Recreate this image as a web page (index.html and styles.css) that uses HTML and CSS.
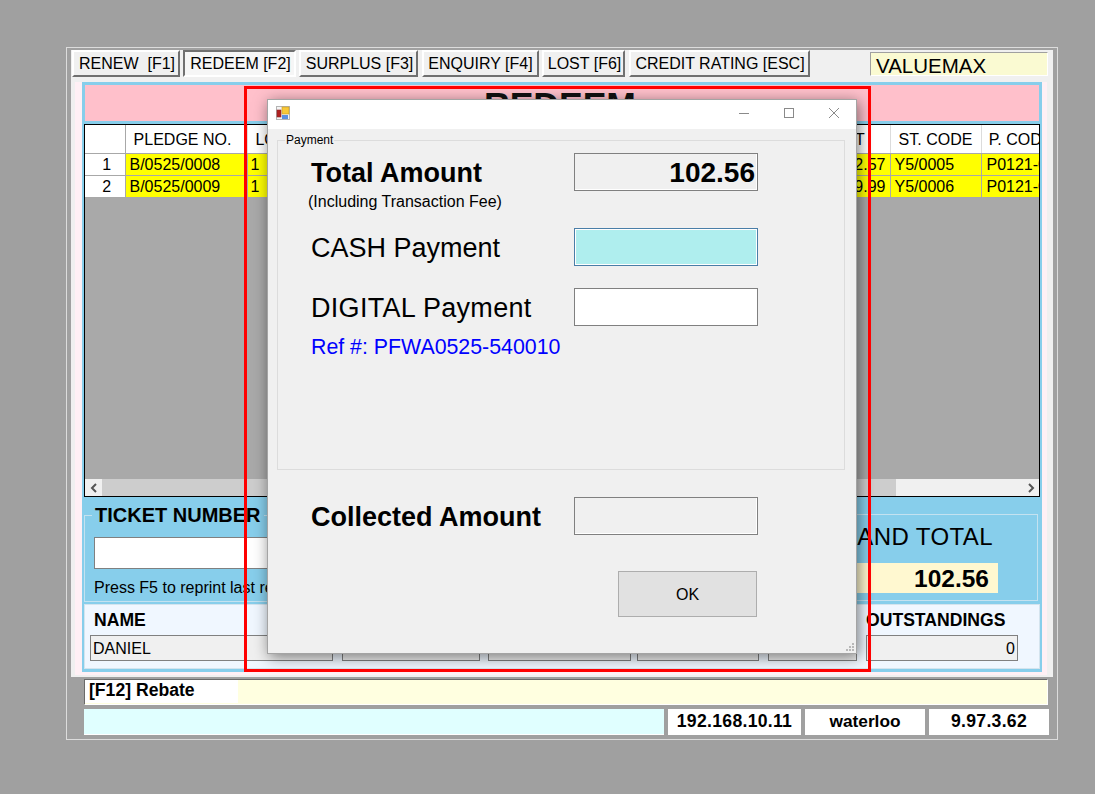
FILE: index.html
```html
<!DOCTYPE html>
<html lang="en">
<head>
    <meta charset="UTF-8">
    <meta name="viewport" content="width=device-width, initial-scale=1.0">
    <title>REDEEM</title>
    <link rel="stylesheet" href="styles.css">
</head>
<body>
    <div class="app">
        <div class="panel">
            <div class="tabs">
                <button type="button" class="tab">RENEW &nbsp;[F1]</button>
                <button type="button" class="tab active">REDEEM [F2]</button>
                <button type="button" class="tab">SURPLUS [F3]</button>
                <button type="button" class="tab">ENQUIRY [F4]</button>
                <button type="button" class="tab">LOST [F6]</button>
                <button type="button" class="tab">CREDIT RATING [ESC]</button>
                <div class="company">VALUEMAX</div>
            </div>
            <div class="blush">
                <div class="frame">
                    <div class="title">REDEEM</div>
                    <div class="grid">
                        <div class="grid-rows">
                            <table class="pledges">
                                <colgroup>
                                    <col class="c-no"><col class="c-pledge"><col class="c-lot"><col class="c-desc">
                                    <col class="c-amount"><col class="c-st"><col class="c-code">
                                </colgroup>
                                <tr>
                                    <th></th><th>PLEDGE NO.</th><th>LOT</th><th></th>
                                    <th>AMOUNT</th><th>ST. CODE</th><th>P. CODE</th>
                                </tr>
                                <tr>
                                    <td class="no">1</td><td>B/0525/0008</td><td>1</td><td></td>
                                    <td class="num">52.57</td><td>Y5/0005</td><td>P0121-0001</td>
                                </tr>
                                <tr>
                                    <td class="no">2</td><td>B/0525/0009</td><td>1</td><td></td>
                                    <td class="num">49.99</td><td>Y5/0006</td><td>P0121-0002</td>
                                </tr>
                            </table>
                        </div>
                        <div class="scrollbar">
                            <span class="sb-btn">
                                <svg width="8" height="10" viewBox="0 0 8 10"><path d="M6 1 2 5l4 4" fill="none" stroke="#555" stroke-width="2"/></svg>
                            </span>
                            <span class="sb-thumb"></span>
                            <span class="sb-track"></span>
                            <span class="sb-btn">
                                <svg width="8" height="10" viewBox="0 0 8 10"><path d="M2 1l4 4-4 4" fill="none" stroke="#555" stroke-width="2"/></svg>
                            </span>
                        </div>
                    </div>
                    <div class="totals">
                        <fieldset class="ticket">
                            <legend>TICKET NUMBER</legend>
                            <input type="text" class="ticket-input">
                            <div class="hint">Press F5 to reprint last receipt</div>
                        </fieldset>
                        <div class="grand">
                            <div class="grand-label">GRAND TOTAL</div>
                            <div class="grand-value">102.56</div>
                        </div>
                    </div>
                    <div class="info">
                        <div class="info-cell">
                            <label>NAME</label>
                            <div class="info-field">DANIEL</div>
                        </div>
                        <div class="info-cell"><label>&nbsp;</label><div class="info-field"></div></div>
                        <div class="info-cell"><label>&nbsp;</label><div class="info-field"></div></div>
                        <div class="info-cell"><label>&nbsp;</label><div class="info-field"></div></div>
                        <div class="info-cell"><label>&nbsp;</label><div class="info-field"></div></div>
                        <div class="info-cell">
                            <label>OUTSTANDINGS</label>
                            <div class="info-field right">0</div>
                        </div>
                    </div>
                </div>
            </div>
        </div>
        <div class="rebate"><span class="rebate-key">[F12] Rebate</span></div>
        <div class="status">
            <div class="status-msg"></div>
            <div class="status-cell ip">192.168.10.11</div>
            <div class="status-cell">waterloo</div>
            <div class="status-cell ip">9.97.3.62</div>
        </div>
    </div>

    <div class="dialog">
        <div class="dialog-bar">
            <svg class="dialog-icon" width="14" height="14" viewBox="0 0 14 14">
                <rect x="0.5" y="0.5" width="13" height="13" fill="#f4f4f4" stroke="#b4b4b4"/>
                <rect x="1" y="4" width="4" height="7" fill="#b02020" stroke="#8a2a2a" stroke-width="0.6"/>
                <rect x="6" y="1" width="7" height="7" fill="#f8c838" stroke="#c89a20" stroke-width="0.6"/>
                <rect x="6" y="9" width="6" height="4" fill="#5a8fe0"/>
            </svg>
            <div class="dialog-btns">
                <svg width="12" height="12" viewBox="0 0 12 12"><path d="M1 6.5h10" stroke="#8a8a8a" fill="none"/></svg>
                <svg width="12" height="12" viewBox="0 0 12 12"><rect x="1.5" y="1.5" width="9" height="9" stroke="#8a8a8a" fill="none"/></svg>
                <svg width="12" height="12" viewBox="0 0 12 12"><path d="M1 1l10 10M11 1 1 11" stroke="#8a8a8a" fill="none"/></svg>
            </div>
        </div>
        <div class="dialog-body">
            <fieldset class="pay-group">
                <legend>Payment</legend>
                <div class="pay-row first">
                    <div>
                        <div class="pay-label strong">Total Amount</div>
                        <div class="pay-sub">(Including Transaction Fee)</div>
                    </div>
                    <input type="text" class="pay-field" value="102.56" readonly>
                </div>
                <div class="pay-row second">
                    <div class="pay-label">CASH Payment</div>
                    <input type="text" class="pay-field cash">
                </div>
                <div class="pay-row">
                    <div class="pay-label wide">DIGITAL Payment</div>
                    <input type="text" class="pay-field digital">
                </div>
                <div class="pay-ref">Ref #: PFWA0525-540010</div>
            </fieldset>
            <div class="pay-row collected">
                <div class="pay-label strong">Collected Amount</div>
                <input type="text" class="pay-field" readonly>
            </div>
            <button type="button" class="ok">OK</button>
        </div>
        <svg class="grip" width="10" height="10" viewBox="0 0 10 10" fill="#b8b8b8">
            <rect x="7" y="1" width="2" height="2"/>
            <rect x="4" y="4" width="2" height="2"/><rect x="7" y="4" width="2" height="2"/>
            <rect x="1" y="7" width="2" height="2"/><rect x="4" y="7" width="2" height="2"/><rect x="7" y="7" width="2" height="2"/>
        </svg>
    </div>

    <div class="marker"></div>
</body>
</html>
```

FILE: styles.css
```css
* {
    box-sizing: border-box;
}
body {
    margin: 0;
    height: 794px;
    overflow: hidden;
    background-color: #a0a0a0;
    font-family: "Liberation Sans", Arial, sans-serif;
    font-size: 16px;
    color: #000;
}
input, button {
    font-family: inherit;
}

/* main window */
.app {
    width: 992px;
    height: 693px;
    margin: 47px 0 0 66px;
    padding: 2px 0 0 4px;
    border: 1px solid #dcdcdc;
}
.panel {
    width: 982px;
    height: 627px;
    background-color: #f0f0f0;
    padding-right: 6px;
}
.tabs {
    display: flex;
    height: 32px;
    padding-left: 1px;
    gap: 3px;
}
.tab {
    flex: none;
    height: 27px;
    padding: 0 0 0 2px;
    font-size: 16px;
    color: #000;
    white-space: nowrap;
    background-color: #f0f0f0;
    border: 2px solid;
    border-color: #fff #707070 #707070 #fff;
}
.tab:nth-child(1) { width: 108px; }
.tab:nth-child(2) { width: 113px; }
.tab:nth-child(3) { width: 119px; }
.tab:nth-child(4) { width: 117px; margin-left: 1px; padding-left: 0; }
.tab:nth-child(5) { width: 83px; }
.tab:nth-child(6) { width: 181px; margin-left: 1px; padding-left: 1px; }
.tab.active {
    border-color: #707070 #fff #fff #707070;
    background-color: #f6f6f6;
}
.company {
    flex: none;
    width: 178px;
    height: 24px;
    margin: 2px 0 0 57px;
    padding-left: 5px;
    font-size: 20.5px;
    line-height: 26px;
    background-color: #fafad2;
    border: 1px solid;
    border-color: #a0a0a0 #fff #fff #a0a0a0;
}
.blush {
    width: 972px;
    height: 593px;
    margin-left: 4px;
    padding: 0 5px 0 7px;
    background-color: #fff0f5;
}
.frame {
    width: 960px;
    height: 590px;
    padding: 3px 2px 0;
    background-color: #87ceeb;
}
.title {
    height: 36px;
    margin: 0 1px 3px;
    padding-right: 4px;
    background-color: #ffc0cb;
    font-size: 35.5px;
    font-weight: bold;
    line-height: 40px;
    text-align: center;
    color: #111;
    overflow: hidden;
}

/* pledge grid */
.grid {
    height: 373px;
    width: 956px;
    background-color: #a9a9a9;
    border: 1px solid #000;
    display: flex;
    flex-direction: column;
    overflow: hidden;
}
.grid-rows {
    flex: 1;
    overflow: hidden;
}
.pledges {
    table-layout: fixed;
    width: 987px;
    border-collapse: collapse;
}
.c-no { width: 40px; }
.c-pledge { width: 122px; }
.c-lot { width: 48px; }
.c-desc { width: 475px; }
.c-amount { width: 120px; }
.c-st { width: 91px; }
.c-code { width: 91px; }
.pledges th {
    height: 28px;
    padding: 2px 0 0;
    font-weight: normal;
    background-color: #fff;
    border-right: 1px solid #dcdcdc;
    border-bottom: 1px solid #a8a8a8;
    text-align: center;
    white-space: nowrap;
}
.pledges th:first-child {
    border-right-color: #a8a8a8;
}
.pledges th:nth-child(2) {
    padding-right: 7px;
}
.pledges th:nth-child(7) {
    padding-right: 12px;
}
.pledges td {
    height: 22px;
    padding: 2px 4px 0;
    background-color: #ff0;
    border-right: 1px solid #a8a8a8;
    border-bottom: 1px solid #a8a8a8;
    white-space: nowrap;
    overflow: hidden;
}
.pledges td:nth-child(3) {
    padding-left: 3px;
}
.pledges td:last-child {
    padding-left: 5px;
}
.pledges td.no {
    padding-left: 8px;
    background-color: #fff;
    text-align: center;
}
.pledges td.num {
    text-align: right;
}
.scrollbar {
    display: flex;
    height: 17px;
    background-color: #f0f0f0;
}
.sb-btn {
    width: 17px;
    display: flex;
    align-items: center;
    justify-content: center;
}
.sb-thumb {
    width: 794px;
    background-color: #cdcdcd;
}
.sb-track {
    flex: 1;
}

/* ticket + grand total */
.totals {
    display: flex;
    justify-content: space-between;
    height: 107px;
    padding: 8px 2px 0 0;
}
.ticket {
    width: 420px;
    height: 97px;
    margin: 0;
    padding: 0 9px;
    border: 1px solid #c4e2f0;
}
.ticket legend {
    padding: 0 3px;
    margin-left: -2px;
    font-size: 20px;
    font-weight: bold;
    line-height: 20px;
}
.ticket-input {
    display: block;
    width: 100%;
    height: 32px;
    margin-top: 12px;
    background-color: #fff;
    border: 1px solid #808080;
}
.hint {
    margin-top: 10px;
    line-height: 18px;
}
.grand {
    width: 340px;
    height: 87px;
    margin-top: 9px;
    padding: 8px 39px 0 0;
    border: 1px solid #c4e2f0;
    text-align: right;
}
.grand-label {
    font-size: 24px;
    letter-spacing: 0.4px;
    line-height: 28px;
    padding-right: 5px;
}
.grand-value {
    height: 30px;
    width: 240px;
    margin: 12px 0 0 auto;
    padding-right: 9px;
    font-size: 24.5px;
    font-weight: bold;
    line-height: 31px;
    background-color: #fff8d0;
}

/* customer details */
.info {
    display: flex;
    height: 65px;
    padding: 6px 0 0 5px;
    width: 956px;
    background-color: #f0f7ff;
    border: 1px solid #d4e4ee;
}
.info-cell label {
    display: block;
    height: 24px;
    padding-left: 4px;
    font-size: 17.6px;
    font-weight: bold;
    line-height: 18px;
}
.info-cell:nth-child(1) { width: 243px; margin-right: 9px; }
.info-cell:nth-child(2) { width: 138px; margin-right: 8px; }
.info-cell:nth-child(3) { width: 143px; margin-right: 6px; }
.info-cell:nth-child(4) { width: 122px; margin-right: 9px; }
.info-cell:nth-child(5) { width: 89px; margin-right: 9px; }
.info-cell:nth-child(6) { width: 152px; }
.info-cell:nth-child(6) label {
    padding-left: 0;
    white-space: nowrap;
}
.info-field {
    height: 26px;
    padding: 1px 2px 0;
    line-height: 24px;
    background-color: #f0f0f0;
    border: 1px solid #808080;
}
.info-field.right {
    text-align: right;
}

/* bottom bars */
.rebate {
    width: 964px;
    height: 26px;
    margin: 2px 0 0 13px;
    background-color: #ffffe0;
    border: 1px solid;
    border-color: #6a6a6a #fff #fff #6a6a6a;
}
.rebate-key {
    display: block;
    width: 153px;
    padding-left: 4px;
    font-size: 17.6px;
    font-weight: bold;
    line-height: 20px;
    background-color: #fff;
    height: 23px;
}
.status {
    display: grid;
    grid-template-columns: 580px 133px 120px 120px;
    gap: 4px;
    height: 26px;
    margin: 4px 0 0 13px;
}
.status-msg {
    background-color: #e0ffff;
    border-bottom: 1px solid #fff;
}
.status-cell {
    background-color: #fff;
    font-size: 17.3px;
    font-weight: bold;
    line-height: 25px;
    text-align: center;
}
.status-cell.ip {
    font-size: 17.6px;
    letter-spacing: 0.3px;
}

/* payment dialog */
.dialog {
    position: absolute;
    left: 267px;
    top: 99px;
    width: 590px;
    height: 555px;
    background-color: #f0f0f0;
    border: 1px solid #a4a4a4;
    box-shadow: 2px 3px 14px rgba(0, 0, 0, 0.5);
}
.dialog-bar {
    display: flex;
    align-items: center;
    justify-content: space-between;
    height: 29px;
    padding: 0 16px 3px 8px;
    background-color: #fff;
}
.dialog-btns {
    display: flex;
    gap: 33px;
}
.dialog-body {
    padding: 4px 0 0 9px;
}
.pay-group {
    width: 568px;
    height: 337px;
    margin: 0;
    padding: 6px 0 0 33px;
    border: 1px solid #dcdcdc;
}
.pay-group legend {
    padding: 0 1px;
    margin-left: -26px;
    font-size: 12px;
    line-height: 14px;
}
.pay-row {
    display: flex;
    justify-content: space-between;
    width: 447px;
}
.pay-row.first {
    height: 75px;
}
.pay-row.second {
    height: 60px;
}
.pay-row.collected {
    margin: 27px 0 0 34px;
}
.pay-label {
    padding-top: 1px;
    font-size: 27px;
    line-height: 38px;
}
.pay-label.strong {
    font-weight: bold;
}
.pay-label.wide {
    letter-spacing: 0.3px;
}
.pay-sub {
    margin: 0 0 0 -3px;
    line-height: 20px;
}
.pay-field {
    width: 184px;
    height: 38px;
    padding: 2px 2px 0 0;
    font-size: 28px;
    font-weight: bold;
    text-align: right;
    color: #000;
    background-color: #f0f0f0;
    border: 1px solid #808080;
    box-shadow: inset -1px -1px 0 #fff;
    outline: none;
}
.pay-field.cash {
    background-color: #afeeee;
    border-color: #4a7ea8;
    box-shadow: inset 0 0 0 1px #fff;
}
.pay-field.digital {
    background-color: #fff;
    box-shadow: none;
}
.pay-ref {
    margin-top: 8px;
    font-size: 21.33px;
    line-height: 24px;
    color: #0000ff;
}
.ok {
    display: block;
    width: 139px;
    height: 46px;
    margin: 35px 0 0 341px;
    padding: 2px 0 0;
    font-size: 16px;
    color: #000;
    background-color: #e1e1e1;
    border: 1px solid #adadad;
}
.grip {
    position: absolute;
    right: 1px;
    bottom: 1px;
}

/* red highlight drawn over the screenshot */
.marker {
    position: absolute;
    left: 244px;
    top: 86px;
    width: 627px;
    height: 586px;
    border: 3px solid #f00;
}
```
